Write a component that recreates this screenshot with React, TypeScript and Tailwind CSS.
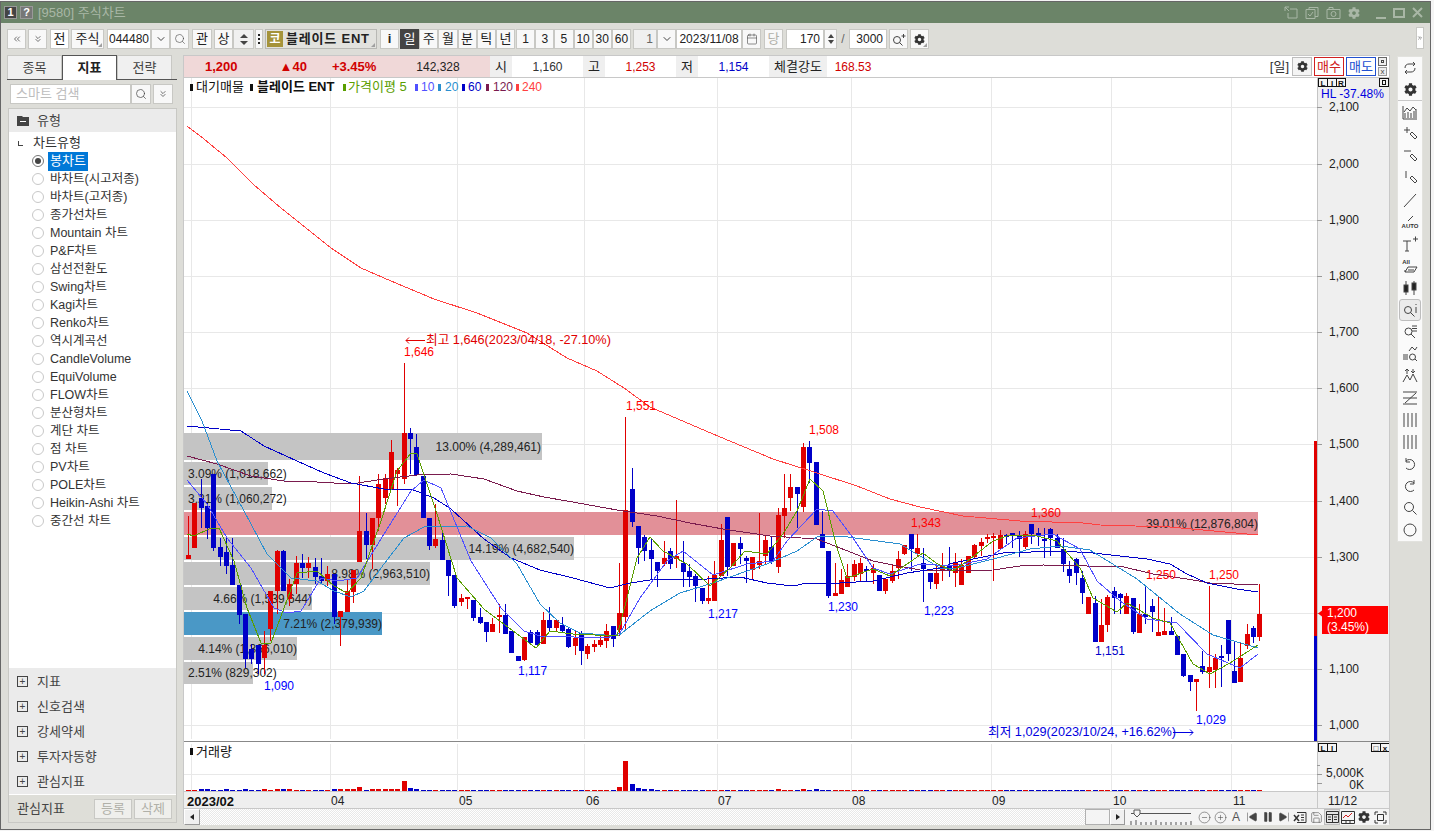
import React from "react";
import { ChevronDown, Search, Calendar, CirclePlus, CircleMinus, SkipBack, SkipForward, Pause, Save, ChevronsDown, ChevronsLeft, ChevronsRight } from "lucide-react";
import { FaCog } from "react-icons/fa";

type Candle = [string, number, number, number, number];

// color, body top, body bottom, wick top, wick bottom (page y)
const candles: Candle[] = [
  ["r",554,558,515,558],["r",502,547,502,547],["b",497,507,478,527],["b",505,527,502,538],["b",473,547,473,550],
  ["b",546,556,537,565],["b",551,565,537,573],["b",564,584,537,584],["b",584,614,584,623],["b",613,658,613,667],
  ["b",648,658,643,663],["b",644,663,644,673],["r",644,657,630,673],["r",590,628,590,640],["r",550,590,549,613],
  ["b",550,590,549,590],["r",583,598,578,605],["r",562,583,555,593],["b",562,567,553,577],["r",562,567,556,577],
  ["b",566,576,557,583],["b",575,580,557,583],["r",573,580,565,585],["b",573,616,573,623],["r",610,616,610,645],
  ["r",590,611,579,611],["r",569,591,569,602],["r",530,561,475,561],["b",530,544,512,558],["r",517,544,517,568],
  ["r",483,517,473,530],["r",477,497,473,503],["r",451,488,439,488],["r",469,473,467,505],["r",432,478,362,483],
  ["b",432,438,427,473],["b",446,474,433,475],["b",475,517,475,517],["b",517,545,517,549],["r",538,545,503,547],
  ["b",539,559,530,559],["b",559,575,559,595],["b",574,605,574,607],["r",597,601,593,605],["r",596,598,596,608],
  ["b",599,617,599,620],["b",616,622,607,623],["b",621,631,621,641],["r",623,631,617,631],["r",614,616,603,632],
  ["b",614,633,603,633],["b",630,652,630,652],["b",655,660,655,660],["r",636,659,636,660],["b",631,642,629,643],
  ["b",631,644,629,645],["r",619,643,611,643],["b",619,627,606,630],["r",619,627,619,630],["b",624,630,616,631],
  ["b",628,646,627,647],["r",637,645,629,654],["b",632,650,630,664],["r",645,653,643,658],["r",643,646,639,651],
  ["r",639,644,635,646],["r",630,640,623,647],["b",625,638,625,646],["r",612,629,562,635],["r",509,616,416,628],
  ["b",488,521,467,526],["b",525,547,525,563],["b",536,550,534,560],["b",549,558,537,578],["b",561,570,561,586],
  ["r",557,563,540,565],["b",550,563,547,568],["r",555,558,499,567],["b",562,571,540,586],["b",570,576,563,586],
  ["b",575,585,573,601],["b",587,600,587,603],["r",597,600,575,603],["r",574,600,560,600],["r",539,575,523,575],
  ["b",516,566,516,575],["r",542,565,542,565],["b",542,548,536,563],["b",557,560,555,582],["r",556,569,556,578],
  ["r",560,564,512,568],["r",539,555,535,563],["b",546,560,535,563],["r",514,566,507,572],["r",507,515,473,537],
  ["r",486,497,473,510],["b",486,493,486,527],["r",446,506,442,511],["b",446,462,440,482],["b",461,524,461,524],
  ["b",533,547,510,547],["b",550,595,550,597],["r",592,595,562,595],["r",579,593,568,593],["r",575,586,563,586],
  ["r",563,576,559,580],["r",562,573,557,580],["b",568,570,565,580],["r",567,572,563,583],["b",574,590,574,590],
  ["r",578,590,578,593],["r",570,580,563,582],["r",558,567,550,578],["r",544,553,544,554],["b",533,548,533,570],
  ["r",547,553,533,555],["b",562,568,547,601],["b",572,581,572,588],["r",572,583,563,588],["r",565,570,552,580],
  ["b",565,570,546,576],["r",562,572,552,586],["r",564,584,558,584],["r",555,572,555,572],
  ["r",544,556,543,557],["r",541,545,537,555],["r",536,538,533,542],["r",535,537,532,580],["r",534,548,529,548],
  ["b",534,536,533,543],["b",532,534,532,547],["b",534,538,530,556],["r",533,546,530,548],["b",523,533,523,543],
  ["b",532,535,527,545],["b",538,539,527,557],["b",528,537,527,555],["b",537,547,533,547],["b",548,563,537,571],
  ["b",568,575,560,582],["b",558,572,557,584],["b",577,592,570,603],["r",596,613,596,613],["b",602,641,595,641],
  ["r",624,641,598,641],["r",596,624,594,631],["b",590,597,586,613],["b",593,597,592,613],["r",595,613,592,613],
  ["b",597,631,597,633],["r",613,632,603,632],["b",613,616,585,623],["b",605,611,598,631],["r",631,635,596,635],
  ["r",630,634,607,634],["b",630,634,616,634],["b",635,654,635,654],["b",653,675,653,676],["b",674,681,674,690],
  ["r",678,681,678,710],["b",665,671,650,673],["r",666,671,585,687],["r",657,669,653,687],["b",655,657,644,686],
  ["b",619,653,619,660],["b",670,682,640,682],["r",657,681,642,681],["r",633,645,623,648],["b",627,636,625,642],
  ["r",613,636,583,640],
];

const lines: [string, string][] = [
  ["#FF4040", "187,125 204,138 227,157 254,184 281,207 301,223 331,247 361,267 391,280 434,298 477,312 527,332 567,357 597,370 624,387 650,406 713,433 773,458 817,472 857,485 890,498 920,506 963,515 1020,520 1083,522 1100,524 1170,526 1258,534"],
  ["#7A1B4E", "187,455 217,463 251,475 284,480 317,481 351,483 384,478 417,474 451,473 484,478 517,490 544,496 567,500 617,509 657,515 690,522 723,528 770,535 817,538 840,547 873,560 893,564 920,569 953,570 993,569 1020,565 1043,564 1087,565 1120,565 1153,573 1187,578 1210,582 1258,584"],
  ["#0000C8", "187,425 241,430 264,445 297,460 324,472 351,482 384,488 411,488 434,497 451,508 484,538 511,557 540,569 573,577 610,587 630,582 657,578 707,578 740,576 767,582 793,585 807,582 840,582 873,580 907,572 940,567 953,562 1003,552 1060,550 1093,552 1147,558 1170,563 1187,573 1207,582 1237,588 1258,591"],
  ["#2A8FD0", "187,390 202,420 217,460 244,510 267,553 291,577 317,580 334,590 351,596 364,590 384,563 404,537 424,526 467,525 491,537 517,563 540,603 560,622 580,632 618,635 650,610 680,592 713,582 767,563 797,550 817,536 840,535 900,543 940,567 953,568 997,557 1030,548 1060,545 1090,549 1137,578 1180,613 1213,634 1258,647"],
  ["#5050FF", "187,479 207,503 227,537 251,567 274,607 287,612 301,610 321,577 337,580 357,577 384,533 411,490 424,479 441,487 471,560 501,607 524,630 540,635 607,637 620,632 640,597 667,560 683,550 713,574 747,563 773,560 787,540 817,508 833,510 853,537 873,567 890,573 920,563 953,565 987,558 1017,537 1053,533 1080,548 1097,580 1120,600 1147,618 1177,622 1207,653 1240,667 1258,653"],
  ["#5A9E00", "187,533 194,535 211,527 219,527 234,560 247,607 261,642 271,642 284,607 297,572 317,570 334,585 347,592 361,577 381,520 397,470 411,452 417,453 437,513 457,577 484,608 517,633 536,647 550,630 573,633 617,635 627,597 637,557 650,536 663,550 687,563 710,585 730,567 745,550 767,553 783,533 797,510 810,478 823,490 837,547 847,577 873,568 890,575 907,563 923,552 936,562 953,570 970,558 993,540 1010,534 1037,535 1057,540 1080,567 1093,597 1117,611 1127,602 1153,617 1170,622 1193,663 1210,673 1230,662 1258,644"],
];

const gridY = [106, 163, 219, 275, 331, 387, 443, 500, 556, 612, 668, 724];
const prices = ["2,100", "2,000", "1,900", "1,800", "1,700", "1,600", "1,500", "1,400", "1,300", "1,200", "1,100", "1,000"];
const gridX = [191, 330, 457, 584, 717, 851, 991, 1111, 1231];
const months: [string, number][] = [["04", 331], ["05", 459], ["06", 586], ["07", 718], ["08", 852], ["09", 992], ["10", 1113], ["11", 1233]];

const profile: [number, number, number, string, string, number, string][] = [
  [432, 27, 542, "#C4C4C4", "13.00% (4,289,461)", 541, "end"],
  [461, 23, 268, "#C4C4C4", "3.09% (1,018,662)", 188, "start"],
  [486, 23, 272, "#C4C4C4", "3.21% (1,060,272)", 188, "start"],
  [511, 23, 1258, "#E29098", "39.01% (12,876,804)", 1258, "end"],
  [536, 23, 574, "#C4C4C4", "14.19% (4,682,540)", 574, "end"],
  [561, 23, 430, "#C4C4C4", "8.98% (2,963,510)", 430, "end"],
  [586, 23, 312, "#C4C4C4", "4.66% (1,539,644)", 312, "end"],
  [611, 23, 382, "#4A98C6", "7.21% (2,379,939)", 382, "end"],
  [636, 23, 297, "#C4C4C4", "4.14% (1,366,010)", 297, "end"],
  [661, 22, 253, "#C4C4C4", "2.51% (829,302)", 188, "start"],
];

const peaks: [string, number, number, string][] = [
  ["1,646", 404, 351, "#FF0000"], ["1,551", 626, 405, "#FF0000"], ["1,508", 809, 429, "#FF0000"], ["1,343", 911, 522, "#FF0000"],
  ["1,360", 1031, 512, "#FF0000"], ["1,250", 1146, 574, "#FF0000"], ["1,250", 1209, 574, "#FF0000"],
  ["1,090", 264, 685, "#0000FF"], ["1,117", 518, 670, "#0000FF"], ["1,217", 708, 613, "#0000FF"], ["1,230", 828, 606, "#0000FF"],
  ["1,223", 924, 610, "#0000FF"], ["1,151", 1095, 650, "#0000C8"], ["1,029", 1196, 719, "#0000FF"],
];

const legend: [string, string, number, number][] = [
  ["#5A9E00", "가격이평 5", 343, 348], ["#5050FF", "10", 415, 421], ["#2A8FD0", "20", 438, 445],
  ["#0000C8", "60", 462, 468], ["#7A1B4E", "120", 486, 493], ["#FF4040", "240", 516, 522],
];

const volumes: Record<number, number> = { 2: 2, 3: 2, 6: 2, 9: 2, 12: 2, 14: 2, 15: 2, 16: 2, 27: 4, 23: 2, 24: 2, 25: 2, 26: 2, 29: 2, 30: 2, 31: 2, 32: 2, 33: 2, 34: 10, 35: 3, 36: 2, 68: 4, 69: 30, 70: 7, 71: 3, 72: 2, 73: 2, 93: 2, 97: 2, 99: 2 };

const chartTypes = ["바차트(시고저종)", "바차트(고저종)", "종가선차트", "Mountain 차트", "P&F차트", "삼선전환도", "Swing차트", "Kagi차트", "Renko차트", "역시계곡선", "CandleVolume", "EquiVolume", "FLOW차트", "분산형차트", "계단 차트", "점 차트", "PV차트", "POLE차트", "Heikin-Ashi 차트", "중간선 차트"];

const candleX = (i: number) => Math.round(188 + i * 6.34);

const Corner = () => <span className="absolute right-px bottom-px w-0 h-0 border-l-[4px] border-l-transparent border-b-[4px] border-b-[#A0A0A0]" />;

function Btn({ className = "", children }: { className?: string; children?: React.ReactNode }) {
  const bg = className.includes("bg-") ? "" : "bg-[#F8F8F8]";
  const border = className.includes("border-[") ? "" : "border-[#C8C8C4]";
  const color = className.includes("text-[#") || className.includes("text-white") ? "" : "text-[#222]";
  const size = className.includes("text-[1") ? "" : "text-[13px]";
  return <div className={`relative h-5 shrink-0 flex items-center justify-center border ${bg} ${border} ${color} ${size} ${className}`}>{children}</div>;
}

function Txt({ x, y, c = "#222", s = 12, a, b, children }: { x: number; y: number; c?: string; s?: number; a?: string; b?: boolean; children: React.ReactNode }) {
  return <text x={x} y={y + 4} fill={c} fontSize={s} textAnchor={a} fontWeight={b ? 700 : 400}>{children}</text>;
}

function Lir({ x, labels }: { x: number; labels: string[] }) {
  return (
    <g>
      {labels.map((l, i) => (
        <g key={i}>
          <rect x={x + i * 9 + 0.5} y={0.5} width={9} height={8} fill="#F4F4F4" stroke="#111" />
          <text x={x + i * 9 + 5} y={7.5} fontSize={8} fontWeight={700} textAnchor="middle" fill="#111">{l}</text>
        </g>
      ))}
    </g>
  );
}

function Tool({ children, sel }: { children: React.ReactNode; sel?: boolean }) {
  return (
    <div className={`h-[22px] w-[22px] mx-auto flex items-center justify-center shrink-0 ${sel ? "bg-[#EBEBEB] border border-[#BDBDBD] rounded-[3px]" : ""}`}>
      <svg width="18" height="18" viewBox="0 0 18 18" fill="none" stroke="#444" strokeWidth="1">{children}</svg>
    </div>
  );
}

const SearchGlyph = () => (
  <>
    <circle cx="7.5" cy="8.5" r="3.5" />
    <path d="M10 11l4 4" />
  </>
);

const BarsGlyph = ({ n = 4 }: { n?: number }) => (
  <path d={Array.from({ length: n }, (_, i) => `M${3 + i * 4} 2v14`).join("")} />
);

function ToolStrip() {
  return (
    <div className="w-[26px] h-[486px] mt-[2px] ml-[7px] shrink-0 bg-[#FAFAFA] border border-[#E2E2DE] flex flex-col">
      <Tool><path d="M4 9c0-3 2-4 4-4h6M12 3l2 2-2 2M14 9c0 3-2 4-4 4H4M6 11l-2 2 2 2" /></Tool>
      <div className="h-[22px] flex items-center justify-center"><FaCog size={13} color="#333" /></div>
      <div className="h-px bg-[#C8C8C8] shrink-0" />
      <Tool><path d="M2 3v13h14M4 15v-5M7 15V9M10 15v-5M13 15V8M15 15V6M3 9l3-4 3 3 3-4 3 3" /></Tool>
      <Tool><path d="M3 5h6M6 2v6M9 9l5 5 2-2-5-5z" /></Tool>
      <Tool><path d="M3 4h7M9 9l5 5 2-2-5-5z" /></Tool>
      <Tool><path d="M5 2v7M9 9l5 5 2-2-5-5z" /></Tool>
      <Tool><path d="M3 16L15 3" /></Tool>
      <Tool>
        <path d="M7 8l5-5" />
        <text x="9" y="15" fontSize="6" textAnchor="middle" fill="#333" stroke="none" fontWeight={700}>AUTO</text>
      </Tool>
      <Tool>
        <path d="M2 6h8M6 6v10M4 16h4M12 4h5M14.5 1.5v5" />
      </Tool>
      <Tool>
        <text x="5" y="7" fontSize="6" fill="#333" stroke="none" textAnchor="middle" fontWeight={700}>All</text>
        <path d="M4 15l3-5h9l-3 5zM4 15l0-2M7 13h6" />
      </Tool>
      <Tool><path d="M5 2v14M13 2v14" /><rect x="3" y="6" width="4" height="7" fill="#222" /><rect x="11" y="4" width="4" height="7" fill="#222" /></Tool>
      <Tool sel>
        <circle cx="7" cy="9" r="3.5" /><path d="M9.5 11.5l4 4M15 6v6M15 3v1" />
      </Tool>
      <Tool><SearchGlyph /><path d="M11 3h5M11 5.5h5M11 8h5" /></Tool>
      <Tool><path d="M8 6l3-4 3 3 2-3M2 10h5M2 12h5M2 14h5" /><circle cx="11.5" cy="12" r="3" /><path d="M14 14l2 2" /></Tool>
      <Tool><path d="M2 15l4-7 3 5 3-6 4 8M6 2v5M4 4l2-2 2 2M12 2v4M10 4l2 2 2-2" /></Tool>
      <Tool><path d="M2 3h14M2 15h14M15 4L4 14M2 9h14" /></Tool>
      <Tool><BarsGlyph /></Tool>
      <Tool><BarsGlyph /></Tool>
      <Tool><path d="M5 6a5 5 0 1 1 0 7M5 3v4h4" /></Tool>
      <Tool><path d="M13 6a5 5 0 1 0 0 7M13 3v4H9" /></Tool>
      <Tool><circle cx="8" cy="8" r="4.5" /><path d="M11.5 11.5l4 4" /></Tool>
      <Tool><circle cx="9" cy="9" r="6" /></Tool>
    </div>
  );
}

function TopBar() {
  const period = ["일", "주", "월", "분", "틱", "년"];
  const mins = ["1", "3", "5", "10", "30", "60"];
  return (
    <div className="h-[31px] flex items-start pt-[6px] pl-[6px] shrink-0">
      <Btn className="w-[19px]"><ChevronsLeft size={10} color="#555" /></Btn>
      <Btn className="w-[19px] ml-[2px]"><ChevronsDown size={10} color="#555" /></Btn>
      <Btn className="w-[19px] ml-[3px] bg-white">전</Btn>
      <Btn className="w-[33px] ml-[2px]">주식<Corner /></Btn>
      <Btn className="w-[44px] ml-[3px] bg-white text-[12px]">044480</Btn>
      <Btn className="w-[19px]"><ChevronDown size={12} color="#444" /></Btn>
      <Btn className="w-[19px]"><Search size={12} color="#444" strokeWidth={1.2} /></Btn>
      <Btn className="w-[20px] ml-[3px]">관</Btn>
      <Btn className="w-[19px] ml-[2px]">상</Btn>
      <Btn className="w-[21px] flex-col gap-[3px] bg-[#F0F0F0]">
        <span className="w-0 h-0 border-x-[4px] border-x-transparent border-b-[4px] border-b-[#444]" />
        <span className="w-0 h-0 border-x-[4px] border-x-transparent border-t-[4px] border-t-[#444]" />
      </Btn>
      <Btn className="w-[8px] ml-px flex-col gap-[2px]">
        <span className="w-[2px] h-[2px] bg-[#222]" />
        <span className="w-[2px] h-[2px] bg-[#222]" />
        <span className="w-[2px] h-[2px] bg-[#222]" />
      </Btn>
      <Btn className="w-[112px] ml-[2px] justify-start bg-[#E2E2DE] border-[#B8B8B4]">
        <span className="w-4 h-4 ml-px bg-[#A5933A] text-white text-[12px] font-bold flex items-center justify-center">코</span>
        <span className="ml-[3px] font-bold text-[13px] text-[#222] tracking-[0.8px]">블레이드 ENT</span>
        <Corner />
      </Btn>
      <Btn className="w-[19px] ml-[3px] font-bold">i</Btn>
      <div className="flex w-[115px] ml-px shrink-0">
        {period.map((p, i) => (
          <Btn key={p} className={`flex-1 ${i === 0 ? "bg-[#444] text-white border-[#444]" : ""}`}>{p}</Btn>
        ))}
      </div>
      <div className="flex w-[115px] ml-px shrink-0">
        {mins.map((m) => (
          <Btn key={m} className="flex-1 text-[12px]">{m}</Btn>
        ))}
      </div>
      <Btn className="w-[24px] ml-[2px] bg-[#F0F0F0] justify-end pr-[3px] text-[12px] text-[#666]">1</Btn>
      <Btn className="w-[19px]"><ChevronDown size={12} color="#444" /></Btn>
      <Btn className="w-[66px] bg-white text-[12px]">2023/11/08</Btn>
      <Btn className="w-[19px]"><Calendar size={12} color="#444" strokeWidth={1.2} /></Btn>
      <Btn className="w-[19px] ml-[3px] text-[#B0B0A8]">당</Btn>
      <Btn className="w-[38px] ml-[3px] bg-white justify-end pr-[3px] text-[12px]">170</Btn>
      <Btn className="w-[13px] flex-col gap-[2px]">
        <span className="w-0 h-0 border-x-[3px] border-x-transparent border-b-[4px] border-b-[#444]" />
        <span className="w-0 h-0 border-x-[3px] border-x-transparent border-t-[4px] border-t-[#444]" />
      </Btn>
      <div className="w-[12px] h-5 flex items-center justify-center text-[12px] text-[#666]">/</div>
      <Btn className="w-[38px] bg-white justify-end pr-[3px] text-[12px]">3000</Btn>
      <Btn className="w-[19px] ml-[2px]">
        <svg width="15" height="15" viewBox="0 0 15 15" fill="none" stroke="#444"><circle cx="6" cy="8" r="3.5" /><path d="M8.5 10.5l3 3M10.5 4h4M12.5 2v4" /></svg>
      </Btn>
      <Btn className="w-[19px] ml-[2px]"><FaCog size={11} color="#333" /><Corner /></Btn>
      <div className="ml-auto mr-[6px] -mt-[2px] w-[8px] h-[22px] bg-white border border-[#C8C8C4] flex items-center justify-center">
        <ChevronsRight size={8} color="#333" />
      </div>
    </div>
  );
}

function SidePanel() {
  const sections = ["지표", "신호검색", "강세약세", "투자자동향", "관심지표"];
  return (
    <div className="w-[170px] mt-px shrink-0 flex flex-col">
      <div className="h-[25px] flex text-[13px] border-b border-[#555] shrink-0">
        <div className="w-[55px] flex items-center justify-center bg-[#F0F0F0] border border-[#C8C8C4] border-b-0 text-[#444]">종목</div>
        <div className="w-[55px] h-[25px] flex items-center justify-center bg-white border border-[#555] border-b-0 font-bold text-[#222]">지표</div>
        <div className="w-[55px] flex items-center justify-center bg-[#F0F0F0] border border-[#C8C8C4] border-b-0 text-[#444]">전략</div>
      </div>
      <div className="flex h-[20px] mt-[4px] ml-[3px] shrink-0">
        <div className="w-[121px] bg-white border border-[#C8C8C4] flex items-center pl-[5px] text-[13px] text-[#BDBDBD]">스마트 검색</div>
        <div className="w-[20px] bg-[#F8F8F8] border border-[#C8C8C4] flex items-center justify-center"><Search size={12} color="#444" strokeWidth={1.4} /></div>
        <div className="w-[20px] ml-[2px] bg-[#F8F8F8] border border-[#C8C8C4] flex items-center justify-center"><ChevronsDown size={10} color="#555" /></div>
      </div>
      <div className="flex-1 mt-[4px] mb-[6px] ml-px border border-[#C8C8C4] bg-white flex flex-col min-h-0">
        <div className="h-[23px] bg-[#EBEBEB] flex items-center pl-[8px] text-[13px] text-[#444] shrink-0">
          <svg width="12" height="10" viewBox="0 0 12 10" className="mr-[8px]"><path d="M0 0h5l1 1h6v9H0z" fill="#444" /><path d="M3 5.5h6" stroke="#fff" /></svg>
          유형
        </div>
        <div className="flex-1 pl-[8px] pt-[2px] text-[13px] text-[#333]">
          <div className="h-[18px] flex items-center">
            <span className="w-[5px] h-[5px] border-l border-b border-[#444] ml-px mr-[10px]" />
            차트유형
          </div>
          <div className="h-[18px] flex items-center">
            <span className="w-3 h-3 ml-[15px] rounded-full border border-[#777] bg-white flex items-center justify-center"><span className="w-[6px] h-[6px] rounded-full bg-[#444]" /></span>
            <span className="ml-[4px] bg-[#0078D7] text-white w-[40px] h-[19px] pl-[2px] flex items-center">봉차트</span>
          </div>
          {chartTypes.map((t) => (
            <div key={t} className="h-[18px] flex items-center">
              <span className="w-3 h-3 ml-[15px] rounded-full border border-[#C8C8C8] bg-white" />
              <span className="ml-[6px] whitespace-nowrap text-[12.5px]">{t}</span>
            </div>
          ))}
        </div>
        <div className="bg-[#EBEBEB] pt-[1px] shrink-0">
          {sections.map((s) => (
            <div key={s} className="h-[25px] flex items-center pl-[8px] text-[13px] text-[#444]">
              <span className="w-[11px] h-[11px] border border-[#444] flex items-center justify-center text-[10px] leading-none mr-[9px]">+</span>
              {s}
            </div>
          ))}
        </div>
        <div className="h-[27px] mt-px bg-[#DEDED8] flex items-center pl-[8px] text-[13px] text-[#444] shrink-0">
          관심지표
          <div className="ml-auto mr-[4px] flex gap-[2px]">
            <div className="w-[38px] h-[20px] border border-[#C8C8C4] bg-[#EFEFEC] text-[#B0B0A8] flex items-center justify-center">등록</div>
            <div className="w-[38px] h-[20px] border border-[#C8C8C4] bg-[#EFEFEC] text-[#B0B0A8] flex items-center justify-center">삭제</div>
          </div>
        </div>
      </div>
    </div>
  );
}

function InfoBar() {
  const Label = ({ w, children }: { w: string; children: React.ReactNode }) => (
    <div className={`${w} h-full bg-[#EFEFEF] flex items-center justify-center text-[13px] text-[#222] shrink-0`}>{children}</div>
  );
  const Val = ({ w, c, children }: { w: string; c: string; children: React.ReactNode }) => (
    <div className={`${w} h-full flex items-center justify-center text-[12px] shrink-0`} style={{ color: c }}>{children}</div>
  );
  return (
    <div className="h-[22px] flex items-stretch border-b border-[#C8C8C8] bg-white shrink-0">
      <div className="w-[306px] bg-[#F0D8D8] flex items-center text-[13px] font-bold text-[#D00000] relative shrink-0">
        <span className="ml-[21px]">1,200</span>
        <span className="ml-[42px]">▲40</span>
        <span className="ml-[25px]">+3.45%</span>
        <span className="ml-[40px] font-normal text-[12px] text-[#222]">142,328</span>
      </div>
      <Label w="w-[22px]">시</Label>
      <Val w="w-[71px]" c="#333">1,160</Val>
      <Label w="w-[22px]">고</Label>
      <Val w="w-[71px]" c="#D00000">1,253</Val>
      <Label w="w-[22px]">저</Label>
      <Val w="w-[71px]" c="#0000C8">1,154</Val>
      <Label w="w-[58px]">체결강도</Label>
      <Val w="w-[52px]" c="#D00000">168.53</Val>
      <div className="ml-auto flex items-center">
        <span className="text-[13px] text-[#333] mr-[3px]">[일]</span>
        <div className="w-[20px] h-[19px] border border-[#BDBDBD] bg-[#F4F4F4] flex items-center justify-center mr-[2px]"><FaCog size={11} color="#333" /></div>
        <div className="w-[30px] h-[19px] border border-[#D02020] text-[#D02020] text-[13px] flex items-center justify-center mr-[2px]">매수</div>
        <div className="w-[30px] h-[19px] border border-[#2050D0] text-[#2050D0] text-[13px] flex items-center justify-center mr-[2px]">매도</div>
        <div className="w-[9px] flex flex-col gap-px mr-[2px]">
          <span className="h-[9px] border border-[#666] bg-[#EEE] flex items-center justify-center"><span className="w-[3px] h-[3px] border border-[#444]" /></span>
          <span className="h-[9px] border border-[#999] bg-[#EEE] text-[8px] leading-[7px] text-center text-[#444]">x</span>
        </div>
      </div>
    </div>
  );
}

function PriceChart() {
  return (
    <svg width="1133" height="664" viewBox="184 77 1133 664" className="block shrink-0">
      <g shapeRendering="crispEdges">
        {gridY.map((y) => <line key={y} x1="184" x2="1317" y1={y + 0.5} y2={y + 0.5} stroke="#E8E8E8" />)}
        {gridX.map((x) => <line key={x} x1={x + 0.5} x2={x + 0.5} y1="77" y2="738" stroke="#E8E8E8" />)}
        {profile.map((p, i) => <rect key={i} x="184" y={p[0]} width={p[2] - 184} height={p[1]} fill={p[3]} />)}
      </g>
      {profile.map((p, i) => (
        <text key={i} x={p[5]} y={p[0] + p[1] / 2 + 4} fontSize="12" fill="#222" textAnchor={p[6]}>{p[4]}</text>
      ))}
      <g shapeRendering="crispEdges">
        {candles.map((c, i) => {
          const x = candleX(i);
          const col = c[0] === "r" ? "#E00000" : "#0000C8";
          return (
            <g key={i}>
              <rect x={x} y={c[3]} width="1" height={c[4] - c[3]} fill={col} />
              <rect x={x - 2} y={c[1]} width="5" height={Math.max(c[2] - c[1], 2)} fill={col} />
            </g>
          );
        })}
      </g>
      {lines.map((l) => <polyline key={l[0]} points={l[1]} fill="none" stroke={l[0]} strokeWidth="1" shapeRendering="crispEdges" />)}
      {peaks.map((p, i) => <Txt key={i} x={p[1]} y={p[2]} c={p[3]}>{p[0]}</Txt>)}
      <path d="M425 339.5h-19M409 336.5l-3 3 3 3" fill="none" stroke="#E00000" />
      <Txt x={426} y={339} c="#E00000" s={12.7}>최고 1,646(2023/04/18, -27.10%)</Txt>
      <Txt x={988} y={731} c="#0000E0" s={12.7}>최저 1,029(2023/10/24, +16.62%)</Txt>
      <path d="M1173 731.5h20M1190 728.5l3 3-3 3" fill="none" stroke="#0000E0" />
      <rect x="190" y="83" width="3" height="7" fill="#111" />
      <Txt x={196} y={86} s={13} c="#111">대기매물</Txt>
      <rect x="250" y="83" width="3" height="7" fill="#111" />
      <Txt x={257} y={86} s={13} c="#111" b>블레이드 ENT</Txt>
      {legend.map((l) => (
        <g key={l[1]}>
          <rect x={l[2]} y="83" width="3" height="7" fill={l[0]} />
          <Txt x={l[3]} y={86} c={l[0]} s={l[1].length > 3 ? 13 : 12}>{l[1]}</Txt>
        </g>
      ))}
      <g shapeRendering="crispEdges">
        <rect x="1314" y="440" width="3" height="195" fill="#E00000" />
        <rect x="1314" y="635" width="3" height="106" fill="#0000C8" />
      </g>
    </svg>
  );
}

function PriceAxis() {
  return (
    <svg width="72" height="664" viewBox="1317 77 72 664" className="block shrink-0 bg-[#EFEFEF]">
      <line x1="1317.5" x2="1317.5" y1="77" y2="741" stroke="#C4C4C4" />
      <g transform="translate(0 77)">
        <Lir x={1318} labels={["L", "I", "R"]} />
        <rect x="1379.5" y="0.5" width="9" height="8" fill="#F4F4F4" stroke="#111" />
        <rect x="1382.5" y="2.5" width="3" height="4" fill="none" stroke="#111" />
      </g>
      <Txt x={1321} y={93} c="#0000E0">HL -37.48%</Txt>
      {gridY.map((y, i) => (
        <g key={y}>
          <line x1="1317" x2="1322" y1={y + 0.5} y2={y + 0.5} stroke="#999" />
          <Txt x={1359} y={y} a="end" c="#222">{prices[i]}</Txt>
        </g>
      ))}
      <path d="M1318 612.5l4-3v6z" fill="#FF0000" />
      <rect x="1322" y="605" width="66" height="28" fill="#FF0000" />
      <Txt x={1327} y={612} c="#fff">1,200</Txt>
      <Txt x={1327} y={626} c="#fff">(3.45%)</Txt>
    </svg>
  );
}

function VolumeChart() {
  return (
    <svg width="1133" height="50" viewBox="184 741 1133 50" className="block shrink-0">
      <g shapeRendering="crispEdges">
        <line x1="184" x2="1317" y1="773.5" y2="773.5" stroke="#E8E8E8" />
        {gridX.map((x) => <line key={x} x1={x + 0.5} x2={x + 0.5} y1="743" y2="791" stroke="#E8E8E8" />)}
        {candles.map((c, i) => {
          const h = volumes[i] ?? 1;
          return <rect key={i} x={candleX(i) - 2} y={790 - h} width="5" height={h} fill={c[0] === "r" ? "#E00000" : "#0000C8"} />;
        })}
        <rect x="190" y="747" width="3" height="7" fill="#111" />
      </g>
      <Txt x={196} y={751} s={13} c="#111">거래량</Txt>
    </svg>
  );
}

function VolumeAxis() {
  return (
    <svg width="72" height="50" viewBox="1317 741 72 50" className="block shrink-0 bg-[#EFEFEF]">
      <line x1="1317.5" x2="1317.5" y1="741" y2="791" stroke="#C4C4C4" />
      <g transform="translate(0 742)">
        <Lir x={1318} labels={["L", "I"]} />
        <Lir x={1371} labels={["□", "x"]} />
      </g>
      <path d="M1317 773.5h5M1317 782.5h5M1317 764.5h3" stroke="#999" />
      <Txt x={1364} y={772} a="end">5,000K</Txt>
      <Txt x={1364} y={784} a="end">0K</Txt>
    </svg>
  );
}

function BottomIcon({ children, sel }: { children: React.ReactNode; sel?: boolean }) {
  return (
    <div className={`w-[16px] h-[16px] flex items-center justify-center shrink-0 ${sel ? "bg-[#E4E4E4] border border-[#BDBDBD]" : ""}`}>{children}</div>
  );
}

function ScrollRow() {
  return (
    <div className="h-[16px] flex items-center bg-[#F4F4F4] shrink-0">
      <div className="w-[16px] h-[16px] shrink-0 bg-[#F0F0F0] border border-[#999] border-l-white border-t-white flex items-center justify-center">
        <span className="w-0 h-0 border-y-[3px] border-y-transparent border-r-[4px] border-r-[#222]" />
      </div>
      <div className="w-[885px] h-full shrink-0 bg-[repeating-conic-gradient(#FFFFFF_0_25%,#E8E8E8_0_50%)] bg-[length:2px_2px]" />
      <div className="w-[25px] h-full shrink-0 bg-[#F4F4F4] border border-[#B0B0B0]" />
      <div className="w-[15px] h-[16px] shrink-0 bg-[#F0F0F0] border border-[#999] border-l-white border-t-white flex items-center justify-center">
        <span className="w-0 h-0 border-y-[3px] border-y-transparent border-l-[4px] border-l-[#222]" />
      </div>
      <svg width="66" height="16" viewBox="0 0 66 16" className="ml-[5px] shrink-0" stroke="#555" fill="none">
        <path d="M1 4.5h60" />
        <path d="M4 1h6v4l-3 3-3-3z" fill="#F4F4F4" />
        <path d="M1 12v4M6 11v5M11 13v3M16 13v3M21 13v3M26 11v5M31 13v3M36 13v3M41 13v3M46 13v3M51 13v3M56 13v3M61 12v4" />
      </svg>
      <div className="flex items-center text-[#444] shrink-0">
        <BottomIcon><CircleMinus size={13} strokeWidth={1} /></BottomIcon>
        <BottomIcon><CirclePlus size={13} strokeWidth={1} /></BottomIcon>
        <BottomIcon><span className="text-[12px] leading-none text-[#555]">A</span></BottomIcon>
        <BottomIcon><SkipBack size={12} fill="#444" strokeWidth={1} /></BottomIcon>
        <BottomIcon><Pause size={12} fill="#444" strokeWidth={1} /></BottomIcon>
        <BottomIcon><SkipForward size={12} fill="#444" strokeWidth={1} /></BottomIcon>
        <BottomIcon><svg width="15" height="13" viewBox="0 0 15 13" fill="none" stroke="#333"><path d="M4 1.5h9v10H4M8 4h3M8 6.5h3M8 9h3" /><path d="M1 4l5 6M6 4l-5 6" strokeWidth="1.5" /></svg></BottomIcon>
        <BottomIcon><Save size={13} strokeWidth={1} /></BottomIcon>
        <BottomIcon sel><svg width="13" height="12" viewBox="0 0 13 12" fill="none" stroke="#333"><path d="M.5.5h12v11H.5zM.5 3.5h12M6.5 3.5v8M2 6h3M2 8.5h3M8 6h3M8 8.5h3" /></svg></BottomIcon>
        <BottomIcon><svg width="14" height="13" viewBox="0 0 14 13" fill="none" stroke="#333"><path d="M.5.5h13v12H.5zM.5 9.5h13M5 9.5v3M9 9.5v3" /><path d="M2 7l3-3 2 2 4-4" stroke="#D02020" /></svg></BottomIcon>
        <BottomIcon><FaCog size={12} color="#333" /></BottomIcon>
        <BottomIcon><svg width="13" height="13" viewBox="0 0 13 13" fill="none" stroke="#333"><path d="M1 4V1h3M9 1h3v3M12 9v3H9M4 12H1V9" /><path d="M3.5 3.5h6v6h-6z" /></svg></BottomIcon>
      </div>
    </div>
  );
}

function ChartPanel() {
  return (
    <div className="w-[1207px] h-[769px] mt-px ml-[6px] shrink-0 bg-white border border-[#C8C8C8] flex flex-col">
      <InfoBar />
      <div className="flex shrink-0 h-[664px]"><PriceChart /><PriceAxis /></div>
      <div className="flex shrink-0 h-[50px] border-t border-[#888] -mt-px"><VolumeChart /><VolumeAxis /></div>
      <div className="h-[17px] flex bg-[#EFEFEF] border-t border-[#C8C8C8] relative shrink-0">
        <div className="w-[1133px] relative text-[12px] text-[#222] h-full">
          <span className="absolute left-[3px] top-0 font-bold text-[13px] text-[#111]">2023/02</span>
          {months.map((m) => (
            <span key={m[0]} className="absolute top-0" style={{ left: m[1] - 184 }}>{m[0]}</span>
          ))}
        </div>
        <div className="flex-1 border-l border-[#C8C8C8] pl-[10px] text-[12px] text-[#222]">11/12</div>
      </div>
      <div className="h-[1px] bg-[#C8C8C8] shrink-0" />
      <ScrollRow />
    </div>
  );
}

export default function App() {
  return (
    <div className="w-[1434px] h-[831px] bg-[#F4F4F4] pt-px font-['Liberation_Sans','Noto_Sans_CJK_KR',sans-serif] overflow-hidden">
      <div className="w-[1431px] h-[829px] border border-[#666] bg-[#DDDDD8] flex flex-col">
        <div className="h-[21px] bg-[#6B8468] flex items-center pl-[3px] shrink-0">
          <span className="w-[13px] h-[13px] bg-[#444] border border-[#999] text-white text-[11px] font-bold flex items-center justify-center">1</span>
          <span className="w-[13px] h-[13px] ml-[3px] bg-[#777] border border-[#999] text-white text-[11px] font-bold flex items-center justify-center">?</span>
          <span className="ml-[5px] text-[13px] text-[#A9B7A6]">[9580] 주식차트</span>
          <div className="ml-auto mr-[7px] flex items-center gap-[7px]">
            <svg width="14" height="14" viewBox="0 0 14 14" fill="none" stroke="#A9B7A6"><path d="M1 5V1h4M1 1l4 4M6 3h7v9H4V7" /></svg>
            <svg width="14" height="14" viewBox="0 0 14 14" fill="none" stroke="#A9B7A6"><path d="M1 3.5h9v9H1zM4 3.5v-2h9v9h-3M3 8l2 2 3-4" /></svg>
            <svg width="15" height="14" viewBox="0 0 15 14" fill="none" stroke="#A9B7A6"><path d="M1 3.5h13v9H1zM3 3.5v-2h4v2" /><circle cx="7.5" cy="8" r="2.5" /></svg>
            <FaCog size={12} color="#A9B7A6" />
            <div className="w-[10px] h-[2px] bg-[#A9B7A6] mt-[10px] ml-[9px]" />
            <div className="w-[12px] h-[10px] border-2 border-[#A9B7A6]" />
            <svg width="11" height="11" viewBox="0 0 11 11" stroke="#A9B7A6" strokeWidth="2"><path d="M1 1l9 9M10 1l-9 9" /></svg>
          </div>
        </div>
        <TopBar />
        <div className="flex flex-1 min-h-0 pl-[6px]">
          <SidePanel />
          <ChartPanel />
          <ToolStrip />
        </div>
      </div>
    </div>
  );
}
